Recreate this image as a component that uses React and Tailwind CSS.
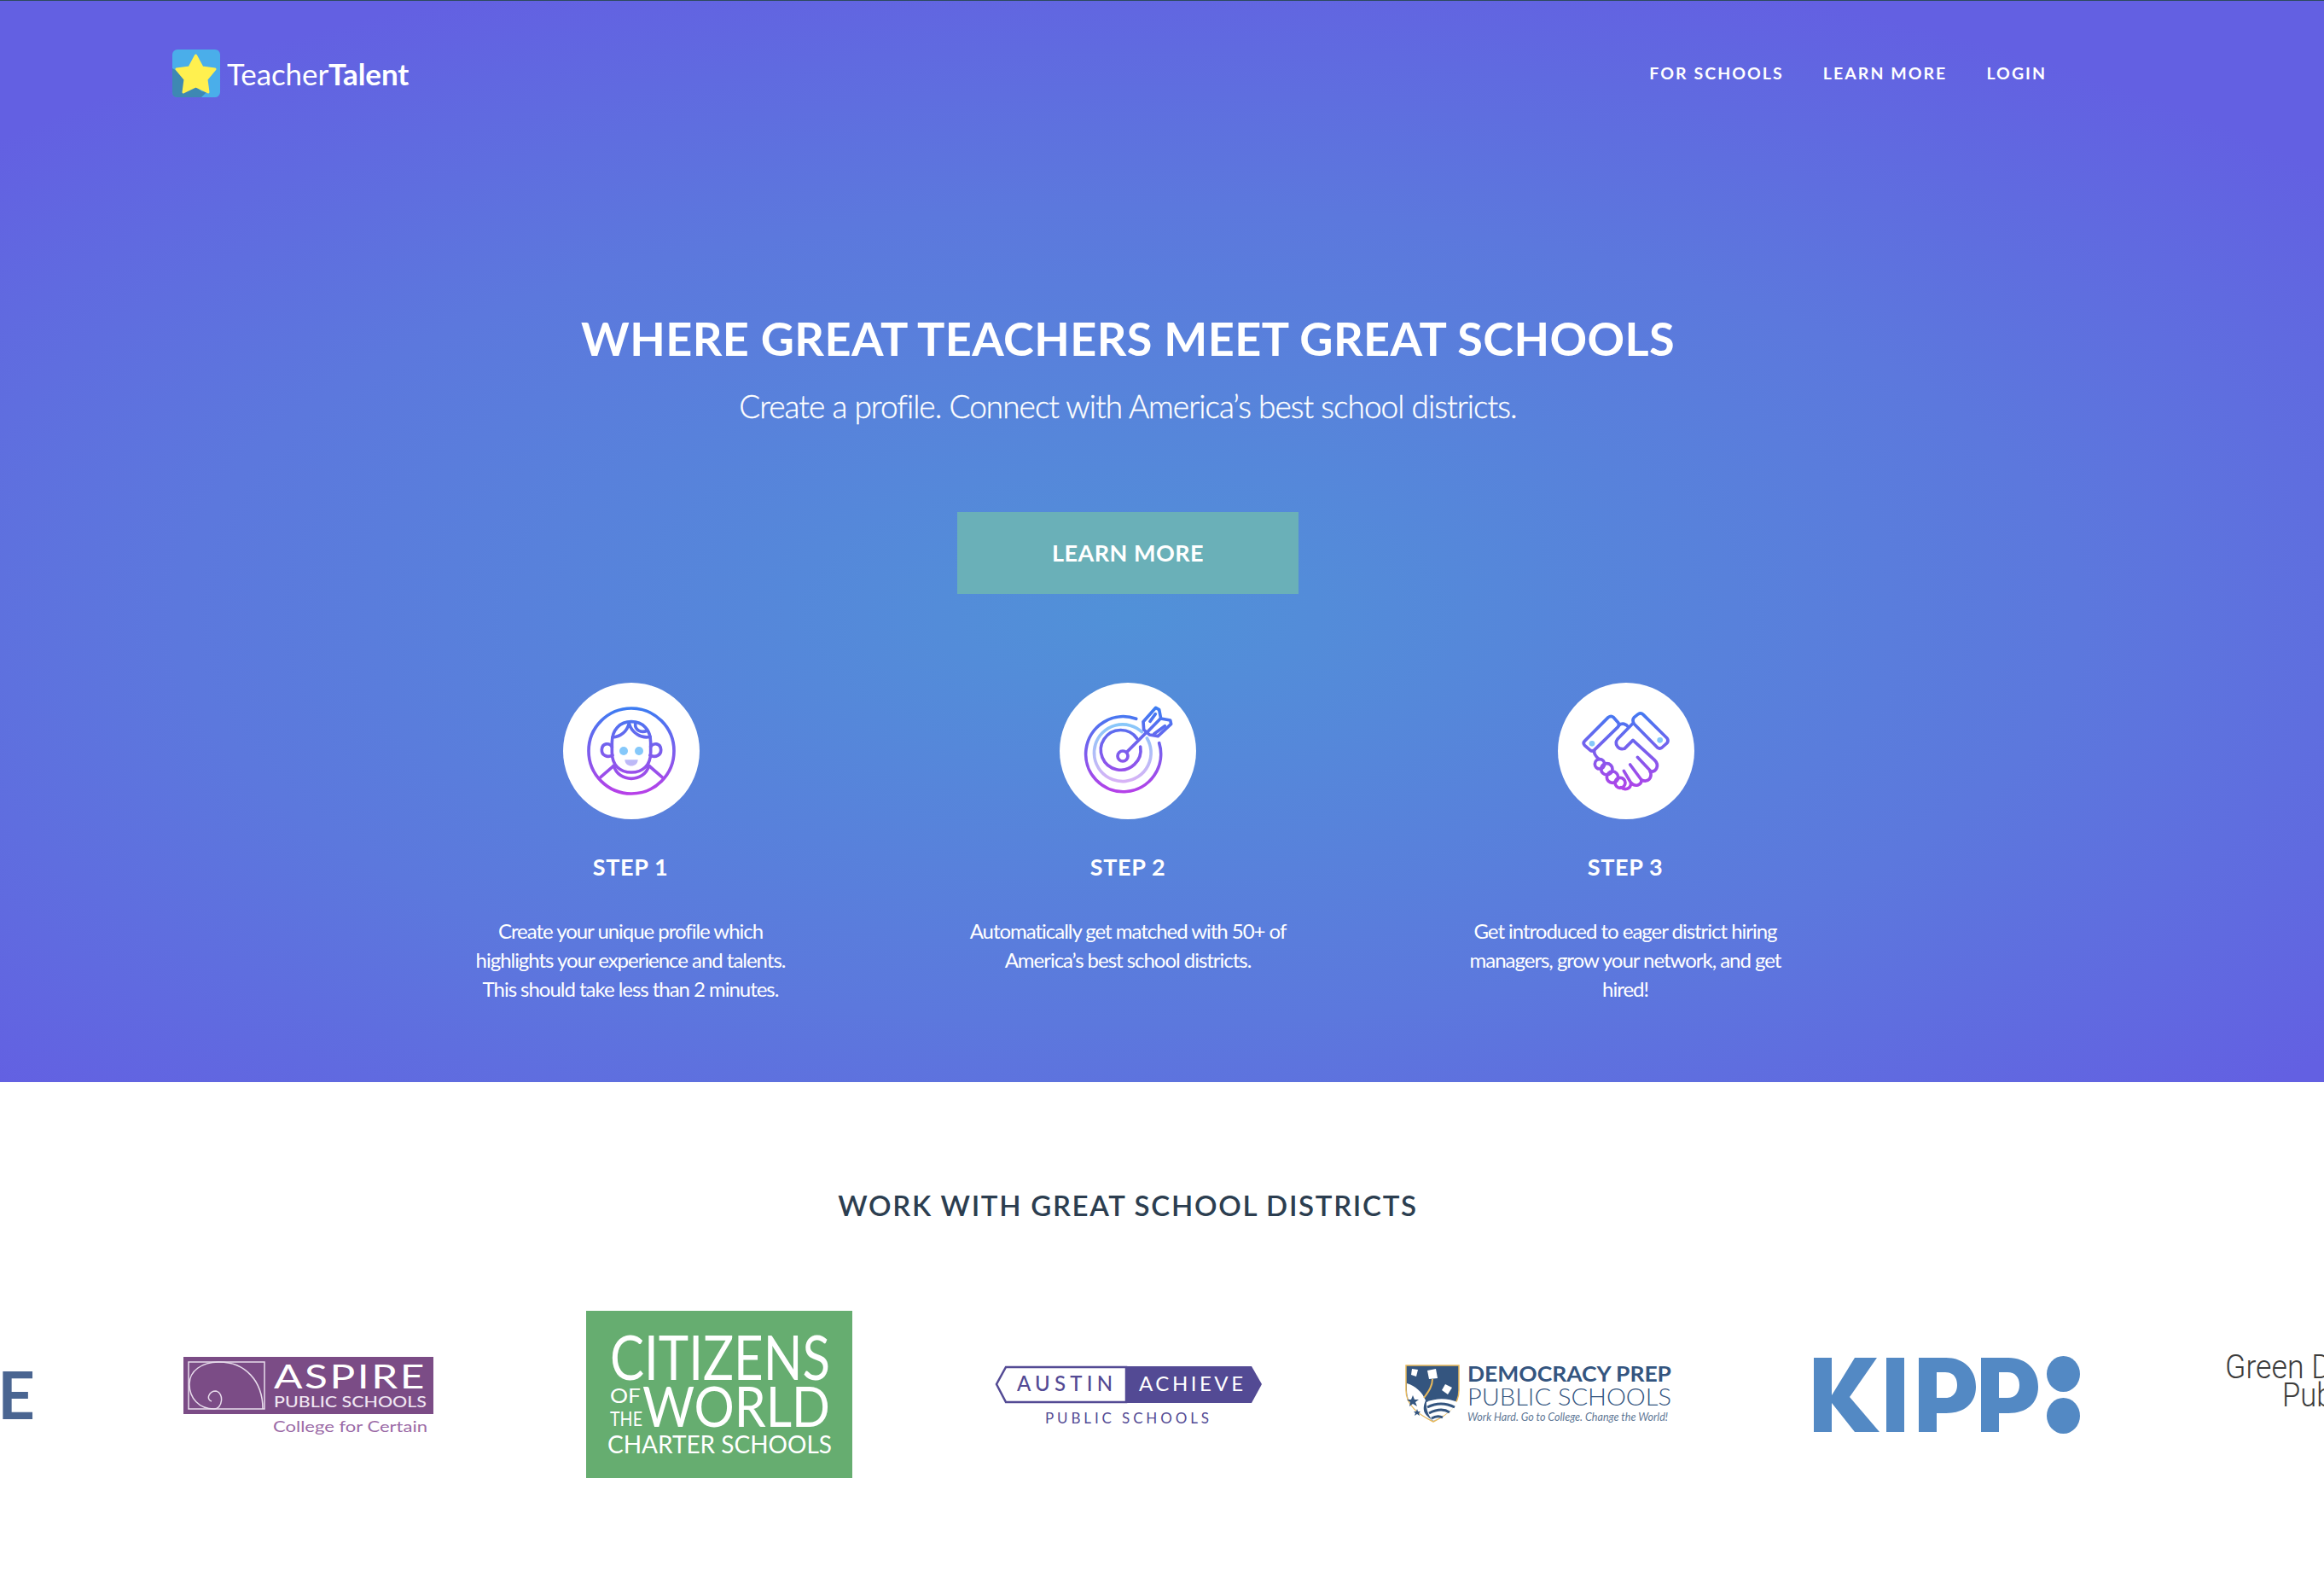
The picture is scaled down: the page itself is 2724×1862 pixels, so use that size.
import React from "react";

const lato = "font-['Lato',sans-serif]";

function Grad({ id }) {
  return (
    <defs>
      <linearGradient id={id} gradientUnits="userSpaceOnUse" x1="0" y1="145" x2="0" y2="455">
        <stop offset="0" stopColor="#3b7df2" />
        <stop offset="1" stopColor="#b93fe8" />
      </linearGradient>
      <linearGradient id={id + "L"} gradientUnits="userSpaceOnUse" x1="0" y1="200" x2="0" y2="430">
        <stop offset="0" stopColor="#85c8fa" />
        <stop offset="1" stopColor="#e0b0f5" />
      </linearGradient>
    </defs>
  );
}

function PersonIcon() {
  return (
    <svg viewBox="60 60 480 480" className="w-full h-full">
      <Grad id="g1" />
      <g fill="none" stroke="url(#g1)" strokeWidth="11" strokeLinecap="round" strokeLinejoin="round">
        <circle cx="300" cy="300" r="150" />
        <path d="M232 270 C232 225 260 197 300 197 C340 197 368 225 368 270 V305 C368 350 340 375 300 375 C260 375 232 350 232 305 Z" />
        <path d="M232 285 C222 270 198 272 196 295 C195 315 215 325 234 315" />
        <path d="M368 285 C378 270 402 272 404 295 C405 315 385 325 366 315" />
        <path d="M234 252 C262 250 285 232 292 202 C300 235 335 258 366 250" />
        <path d="M314 204 C312 224 332 240 356 228" />
        <path d="M238 352 C255 412 345 412 362 352" />
        <path d="M238 352 L192 392" />
        <path d="M362 352 L408 392" />
      </g>
      <circle cx="273" cy="300" r="15" fill="#85c8fa" />
      <circle cx="327" cy="300" r="15" fill="#85c8fa" />
      <path d="M277 331 H323 C322 360 278 360 277 331 Z" fill="url(#g1L)" />
    </svg>
  );
}

function TargetIcon() {
  return (
    <svg viewBox="66 60 480 480" className="w-full h-full">
      <Grad id="g2" />
      <g fill="none" strokeLinecap="round" strokeLinejoin="round" strokeWidth="11">
        <path d="M335 187 A132 132 0 1 0 416 272" stroke="url(#g2)" />
        <path d="M355 233 A100 100 0 1 0 373 255" stroke="url(#g2L)" />
        <path d="M338 256 A70 70 0 1 0 350 285" stroke="url(#g2)" />
        <circle cx="288" cy="318" r="18" stroke="url(#g2)" />
        <path d="M302 304 L372 234" stroke="url(#g2)" />
        <path d="M360 197 L404 148 L416 155 L422 186 L455 192 L458 205 L412 248 L382 243 L362 225 Z" stroke="url(#g2)" />
        <path d="M376 232 L420 187 M384 196 L403 170 M398 240 L436 212" stroke="url(#g2)" />
      </g>
    </svg>
  );
}

function ShakeIcon() {
  return (
    <svg viewBox="78 60 480 480" className="w-full h-full">
      <Grad id="g3" />
      <g fill="none" stroke="url(#g3)" strokeWidth="11" strokeLinecap="round" strokeLinejoin="round">
        <path d="M172 265 L255 182 Q265 174 274 182 L290 200 Q296 208 290 215 L207 296 Q198 304 190 296 L172 280 Q165 272 172 265 Z" />
        <path d="M346 182 L361 170 Q370 164 378 172 L462 255 Q468 264 462 272 L444 288 Q436 294 428 288 L346 205 Q338 192 346 182 Z" />
        <path d="M292 210 C305 200 318 205 326 216" />
        <path d="M340 205 L288 258 C275 275 290 298 312 292 L342 262 L418 332 C436 350 425 375 402 372" />
        <path d="M206 300 C205 312 212 320 222 328" />
        <path d="M358 322 L402 368 C412 395 395 412 372 402 L332 348" />
        <path d="M372 402 C372 420 350 428 335 412 L310 370" />
        <path d="M335 412 C335 436 312 438 300 428" />
        <circle cx="225" cy="346" r="17" />
        <circle cx="250" cy="364" r="20" />
        <circle cx="270" cy="392" r="20" />
        <circle cx="297" cy="412" r="18" />
      </g>
      <circle cx="198" cy="274" r="10" fill="#85c8fa" />
      <circle cx="437" cy="262" r="10" fill="#85c8fa" />
    </svg>
  );
}

function Step({ icon, title, lines, iconClass }) {
  return (
    <div className="w-[583px] flex flex-col items-center text-white">
      <div className={`w-40 h-40 rounded-full bg-white ${iconClass}`}>{icon}</div>
      <div className="mt-[39px] text-[27px] leading-[34px] font-bold tracking-[0.6px]">{title}</div>
      <div className="mt-[41px] text-[24px] leading-[34px] font-normal tracking-[-1.03px] text-center">
        {lines.map((l) => (
          <div key={l}>{l}</div>
        ))}
      </div>
    </div>
  );
}

function Slide({ children }) {
  return <div className="w-[480px] shrink-0 flex items-center justify-center">{children}</div>;
}

const sans = "Lato, sans-serif";

function Aspire() {
  return (
    <svg width="296" height="95" viewBox="0 0 296 95" className="mt-[7px]">
      <rect x="0" y="0" width="293" height="67" fill="#7b4c86" />
      <rect x="6" y="6" width="89" height="55" fill="none" stroke="#e8dcec" strokeWidth="1.5" />
      <path d="M36 61 C18 61 7 48 7 32 C7 16 22 6 42 6 C72 6 93 28 93 61" fill="none" stroke="#e8dcec" strokeWidth="1.5" />
      <path d="M36 61 C46 61 48 42 38 40 C30 40 26 50 33 52" fill="none" stroke="#e8dcec" strokeWidth="1.5" />
      <text x="106" y="37" fontFamily={sans} fontSize="39" letterSpacing="2" fill="#fff" textLength="179" lengthAdjust="spacingAndGlyphs">ASPIRE</text>
      <text x="106" y="59" fontFamily={sans} fontSize="18" fontWeight="500" fill="#f0e6f2" textLength="179" lengthAdjust="spacingAndGlyphs">PUBLIC SCHOOLS</text>
      <text x="105" y="88" fontFamily={sans} fontSize="18" fill="#9b6aa6" textLength="181" lengthAdjust="spacingAndGlyphs">College for Certain</text>
    </svg>
  );
}

function Citizens() {
  return (
    <svg width="312" height="196" viewBox="0 0 312 196">
      <rect width="312" height="196" fill="#66ad70" />
      <g fontFamily={sans} fill="#fff">
        <text x="28" y="81" fontSize="72" textLength="258" lengthAdjust="spacingAndGlyphs">CITIZENS</text>
        <text x="28" y="108" fontSize="24" textLength="36" lengthAdjust="spacingAndGlyphs">OF</text>
        <text x="28" y="135" fontSize="24" textLength="38" lengthAdjust="spacingAndGlyphs">THE</text>
        <text x="66" y="136" fontSize="65" textLength="220" lengthAdjust="spacingAndGlyphs">WORLD</text>
        <text x="25" y="167" fontSize="29" textLength="263" lengthAdjust="spacingAndGlyphs">CHARTER SCHOOLS</text>
      </g>
    </svg>
  );
}

function Austin() {
  return (
    <svg width="316" height="76" viewBox="0 0 316 76" className="mt-[8px]">
      <path d="M14 2 H155 V43 H14 L3 22 Z" fill="none" stroke="#534a94" strokeWidth="2.5" />
      <path d="M155 1 H302 L314 22 L302 44 H155 Z" fill="#534a94" />
      <text x="27" y="30" fontFamily={sans} fontSize="24" fontWeight="500" fill="#534a94" textLength="112" lengthAdjust="spacing">AUSTIN</text>
      <text x="170" y="30" fontFamily={sans} fontSize="24" fill="#fff" textLength="122" lengthAdjust="spacing">ACHIEVE</text>
      <text x="60" y="68" fontFamily={sans} fontSize="17" fill="#534a94" textLength="192" lengthAdjust="spacing">PUBLIC SCHOOLS</text>
    </svg>
  );
}

function Democracy() {
  return (
    <svg width="316" height="70" viewBox="0 0 316 70">
      <path d="M3 1 H65 V30 C65 48 52 58 35 67 C18 58 3 48 3 30 Z" fill="#34557f" stroke="#e8b95c" strokeWidth="1.5" />
      <path d="M4 22 C14 25 22 32 26 42 C20 56 27 60 35 66 C18 58 4 48 4 30 Z" fill="#fff" />
      <path d="M27 44 C40 38 54 40 63 44 C60 52 48 60 35 66 C30 62 26 52 27 44 Z" fill="#fff" />
      <path d="M28 50 C40 44 52 46 60 50 M30 57 C40 52 48 52 54 56 M33 63 C38 60 42 60 46 62" fill="none" stroke="#34557f" strokeWidth="3" />
      <path d="M10 5 L17 6 L15 14 L9 12 Z M28 7 L38 5 L40 16 L30 17 Z M49 23 L57 27 L52 35 L45 30 Z" fill="#fff" />
      <path d="M11 36 l2 5 5 0 -4 3 2 5 -5 -3 -4 3 1 -5 -4 -3 5 0 Z M16 52 l1 3 3 0 -2 2 1 3 -3 -2 -3 2 1 -3 -2 -2 3 0 Z" fill="#34557f" />
      <path d="M34 17 C34 25 30 31 24 39" fill="none" stroke="#e8b95c" strokeWidth="2" />
      <text x="75" y="20" fontFamily={sans} fontSize="24" fontWeight="700" fill="#34557f" textLength="239" lengthAdjust="spacingAndGlyphs">DEMOCRACY PREP</text>
      <text x="75" y="48" fontFamily={sans} fontSize="27" fontWeight="300" fill="#34557f" textLength="239" lengthAdjust="spacingAndGlyphs">PUBLIC SCHOOLS</text>
      <text x="75" y="66" fontFamily={sans} fontSize="13" fontStyle="italic" fill="#5f7896" textLength="235" lengthAdjust="spacingAndGlyphs">Work Hard. Go to College. Change the World!</text>
    </svg>
  );
}

function Kipp() {
  return (
    <svg width="316" height="92" viewBox="0 0 316 92">
      <g fill="#5389c4">
        <path d="M1 3 H22 V47 L49 3 H75 L43 49 L78 90 H49 L22 56 V90 H1 Z" />
        <rect x="86" y="3" width="21" height="87" />
        <path fillRule="evenodd" d="M124 3 H156 C178 3 191 18 191 37 C191 56 178 68 156 68 H145 V90 H124 Z M145 20 V50 H155 C164 50 169 44 169 35 C169 26 164 20 155 20 Z" />
        <path fillRule="evenodd" d="M197 3 H229 C251 3 264 18 264 37 C264 56 251 68 229 68 H218 V90 H197 Z M218 20 V50 H228 C237 50 242 44 242 35 C242 26 237 20 228 20 Z" />
        <ellipse cx="293.5" cy="22" rx="19.5" ry="21" />
        <ellipse cx="293.5" cy="71" rx="19.5" ry="21" />
      </g>
    </svg>
  );
}

function GreenDot() {
  return (
    <svg width="316" height="92" viewBox="0 0 316 92" className="overflow-visible">
      <g fontFamily="Roboto, sans-serif" fontWeight="300" fontSize="39" fill="#3c3c3c">
        <text x="3" y="27" textLength="156" lengthAdjust="spacingAndGlyphs">Green Dot</text>
        <text x="70" y="60" textLength="222" lengthAdjust="spacingAndGlyphs">Public Schools</text>
      </g>
    </svg>
  );
}

function ELogo() {
  return (
    <div className="w-[316px] flex justify-end">
      <span className="font-['Lato',sans-serif] font-bold text-[76px] leading-none text-[#4a6591]">E</span>
    </div>
  );
}

export default function App() {
  return (
    <div className={`${lato} min-h-[1862px] bg-white overflow-hidden`}>
      <section className="h-[1268px] border-t border-[#2d4a5e] bg-[radial-gradient(ellipse_1850px_800px_at_1322px_720px,#5191d8_0%,#5c78dd_60%,#6360e2_100%)]">
        <div className="w-[2644px]">
          <nav className="h-[170px] pl-[202px] pr-[245px] flex items-center justify-between">
            <div className="flex items-center gap-2">
              <svg width="56" height="56" viewBox="0 0 56 56">
                <rect width="56" height="56" rx="6" fill="#4aaeea" />
                <path d="M0 22 L14 30 L34 49 L40 50 L34 56 H6 Q0 56 0 50 Z" fill="#3e88b3" />
                <path d="M27.5 7 L35 21 L50 23 L40 35 L42 50 L27.5 43 L13 50 L15 35 L5 23 L20 21 Z" fill="#fff04f" stroke="#fff04f" strokeWidth="3" strokeLinejoin="round" />
              </svg>
              <div className="text-[35px] leading-none text-white tracking-[-0.1px]">
                Teacher<span className="font-bold">Talent</span>
              </div>
            </div>
            <div className="flex items-center gap-[46px] text-white text-[19.5px] font-bold tracking-[2.05px]">
              <span>FOR SCHOOLS</span>
              <span>LEARN MORE</span>
              <span>LOGIN</span>
            </div>
          </nav>
          <div className="flex flex-col items-center text-white">
            <h1 className="mt-[193px] text-[54px] leading-[66px] font-bold tracking-[0.4px]">WHERE GREAT TEACHERS MEET GREAT SCHOOLS</h1>
            <p className="mt-[23px] text-[37px] leading-[46px] font-light tracking-[-0.97px] [-webkit-text-stroke:0.35px_#fff]">Create a profile. Connect with America’s best school districts.</p>
            <button className="mt-[101px] w-[400px] h-[96px] bg-[#6ab0b8] text-[27px] font-bold tracking-[0.5px]">LEARN MORE</button>
            <div className="mt-[104px] flex justify-center">
              <Step
                icon={<PersonIcon />}
                iconClass="ml-[2px]"
                title="STEP 1"
                lines={["Create your unique profile which", "highlights your experience and talents.", "This should take less than 2 minutes."]}
              />
              <Step
                icon={<TargetIcon />}
                iconClass=""
                title="STEP 2"
                lines={["Automatically get matched with 50+ of", "America’s best school districts."]}
              />
              <Step
                icon={<ShakeIcon />}
                iconClass="ml-[2px]"
                title="STEP 3"
                lines={["Get introduced to eager district hiring", "managers, grow your network, and get", "hired!"]}
              />
            </div>
          </div>
        </div>
      </section>
      <section className="w-[2644px]">
        <h2 className="mt-[122px] text-center text-[33px] leading-[44px] font-semibold tracking-[1.7px] text-[#2c3e50]">WORK WITH GREAT SCHOOL DISTRICTS</h2>
        <div className="mt-[102px] h-[196px] flex -ml-[357px]">
          <Slide><ELogo /></Slide>
          <Slide><Aspire /></Slide>
          <Slide><Citizens /></Slide>
          <Slide><Austin /></Slide>
          <Slide><Democracy /></Slide>
          <Slide><Kipp /></Slide>
          <Slide><GreenDot /></Slide>
        </div>
      </section>
    </div>
  );
}
